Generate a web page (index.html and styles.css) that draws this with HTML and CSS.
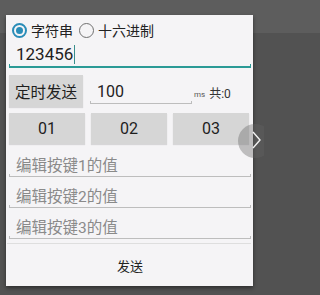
FILE: index.html
```html
<!DOCTYPE html>
<html>
<head>
<meta charset="utf-8">
<link rel="stylesheet" href="styles.css">
</head>
<body>
<div class="screen">
  <div class="dialog">
    <div class="radios">
      <div class="radio"><span class="dot on"></span><span>字符串</span></div>
      <div class="radio"><span class="dot"></span><span>十六进制</span></div>
    </div>
    <div class="field main"><span>123456</span><span class="caret"></span></div>
    <div class="timer">
      <div class="btn wide">定时发送</div>
      <div class="field small">100</div>
      <span class="ms">ms</span><span class="count">共:0</span>
    </div>
    <div class="keys">
      <div class="btn">01</div>
      <div class="btn">02</div>
      <div class="btn">03</div>
    </div>
    <div class="edits">
      <div class="field ph">编辑按键1的值</div>
      <div class="field ph">编辑按键2的值</div>
      <div class="field ph">编辑按键3的值</div>
    </div>
    <div class="divider"></div>
    <div class="send">发送</div>
  </div>
  <div class="fab">
    <svg width="34" height="34" viewBox="0 0 34 34"><path d="M15 8 L22 16 L15 24" fill="none" stroke="#f2f2f2" stroke-width="1.4"/></svg>
  </div>
</div>
</body>
</html>
```
FILE: styles.css
```css
html, body {
  margin: 0;
  padding: 0;
}
body {
  width: 264px;
  height: 295px;
  overflow: hidden;
  background: linear-gradient(#5d5d5d 0, #5d5d5d 33px, #525252 33px);
  font-family: Roboto, "Noto Sans CJK SC", sans-serif;
  color: #222;
}
.screen {
  position: relative;
  width: 264px;
  height: 295px;
  padding-top: 15px;
  box-sizing: border-box;
}
.dialog {
  margin-left: 6px;
  width: 247px;
  height: 271px;
  box-sizing: border-box;
  padding: 4px 2px 0 3px;
  background: #f5f4f6;
  box-shadow: 0 2px 4px rgba(0,0,0,0.45);
  display: flex;
  flex-direction: column;
}
.radios {
  height: 22px;
  display: flex;
  align-items: center;
  font-size: 14px;
  padding-left: 3px;
}
.radio {
  display: flex;
  align-items: center;
  margin-right: 6px;
}
.dot {
  width: 15px;
  height: 15px;
  box-sizing: border-box;
  border: 1.5px solid #707070;
  border-radius: 50%;
  margin-right: 4px;
  position: relative;
}
.dot.on {
  border: 2px solid #2a8db8;
}
.dot.on::after {
  content: "";
  position: absolute;
  left: 2px;
  top: 2px;
  width: 7px;
  height: 7px;
  border-radius: 50%;
  background: #2a8db8;
}
.field {
  position: relative;
  box-sizing: border-box;
  border-bottom: 1px solid #bdbdbd;
}
.field::before, .field::after {
  content: "";
  position: absolute;
  bottom: -1px;
  width: 1px;
  height: 3px;
  background: #bdbdbd;
}
.main {
  height: 27px;
  display: flex;
  align-items: center;
  padding: 1px 0 0 7px;
  font-size: 17px;
  border-bottom: 2px solid #2b9a96;
}
.main::before, .main::after {
  background: #2b9a96;
  height: 4px;
  bottom: -2px;
}
.field::before { left: 0; }
.field::after { right: 0; }
.caret {
  width: 1px;
  height: 19px;
  background: #3a8f8c;
  margin-left: 1px;
}
.timer {
  margin-top: 7px;
  height: 32px;
  display: flex;
  align-items: center;
}
.btn {
  background: #d6d6d6;
  height: 100%;
  display: flex;
  align-items: center;
  justify-content: center;
  font-size: 16px;
  color: #1e1e1e;
  box-shadow: 0 1px 1px rgba(0,0,0,0.12);
}
.wide {
  width: 74px;
  font-size: 15.5px;
}
.small {
  width: 102px;
  margin-left: 7px;
  height: 29px;
  align-self: flex-start;
  display: flex;
  align-items: center;
  padding: 4px 0 0 7px;
  font-size: 16px;
}
.ms {
  font-size: 8px;
  color: #555;
  margin-left: 2px;
  margin-top: 6px;
}
.count {
  font-size: 12px;
  color: #333;
  margin-left: 4px;
  margin-top: 2px;
}
.keys {
  margin-top: 6px;
  height: 31px;
  display: grid;
  grid-template-columns: 76px 76px 76px;
  column-gap: 6px;
}
.edits {
  margin-top: 2px;
  display: flex;
  flex-direction: column;
}
.ph {
  height: 31px;
  padding: 5px 0 0 7px;
  display: flex;
  align-items: center;
  font-size: 15.5px;
  color: #8a8a8a;
}
.divider {
  margin: 4px 0 0 -2px;
  height: 1px;
  background: #dedede;
}
.send {
  height: 42px;
  display: flex;
  align-items: center;
  justify-content: center;
  font-size: 13px;
  color: #222;
}
.fab {
  position: absolute;
  left: 238px;
  top: 124px;
  width: 34px;
  height: 34px;
  border-radius: 50%;
  background: rgba(100,100,100,0.38);
}
.fab svg {
  display: block;
}
```
